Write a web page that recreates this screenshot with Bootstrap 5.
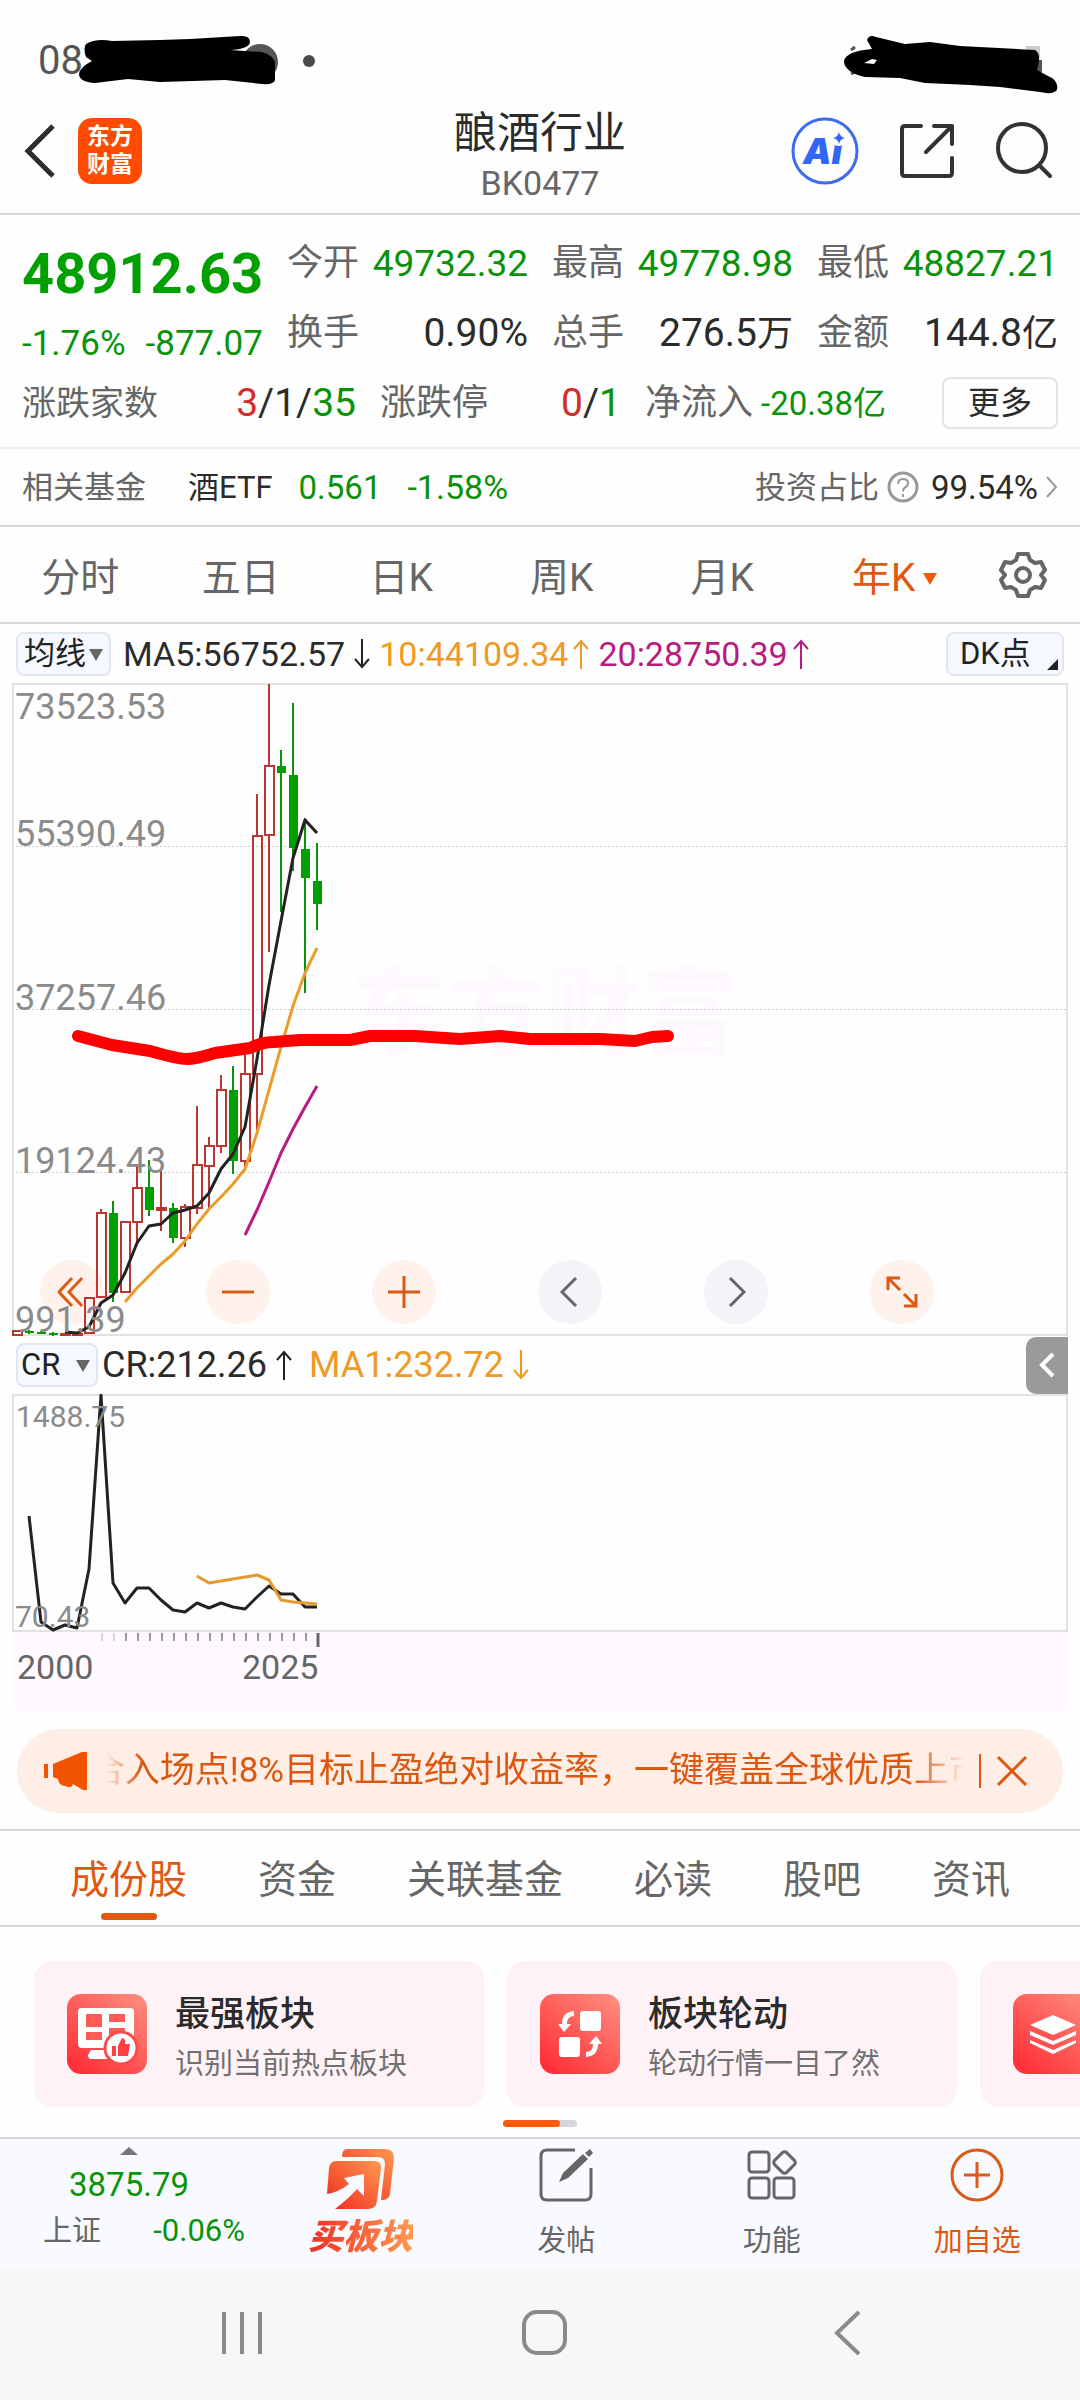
<!DOCTYPE html>
<html lang="zh-CN">
<head>
<meta charset="utf-8">
<meta name="viewport" content="width=device-width, initial-scale=1">
<title>酿酒行业 BK0477</title>
<link href="https://cdn.jsdelivr.net/npm/bootstrap@5.3.0/dist/css/bootstrap.min.css" rel="stylesheet">
<style>
:root{--up:#d42b2b;--down:#0a930a;--ink:#2b2b2b;--soft:#666;--accent:#e2570f;--rule:#d9d9d9}
body{font-family:Roboto,"Noto Sans CJK SC",sans-serif;color:var(--ink);background:#fefefe;font-size:36px;line-height:1;overflow-x:hidden}
svg{display:block;flex:none}
a{color:inherit;text-decoration:none}
.btn{--bs-btn-padding-x:0;--bs-btn-padding-y:0;--bs-btn-border-width:0;line-height:1;color:inherit;font-size:inherit}
.t-up{color:var(--up)}.t-down{color:var(--down)}.t-soft{color:var(--soft)}.t-accent{color:var(--accent)}
.t-ma10{color:#ee9a24}.t-ma20{color:#b81c80}
.rule-b{border-bottom:2px solid var(--rule)}
.statusbar{height:110px}
.topbar{height:105px;padding:0 25px 22px 24px}
.topbar .title{font-size:43px;line-height:46px}
.topbar .code{font-size:34px;line-height:54px}
.topbar .actions{gap:40px}
.brand{width:64px;height:66px;margin-left:22px;border-radius:14px;background:#ff4a00;color:#fff;font-size:23px;line-height:28px;font-weight:700}
.quote{padding:13px 22px 9px;border-bottom:2px solid #ececec}
.price-box{width:265px;color:#00a000}
.price{font-size:56px;line-height:92px;font-weight:700}
.change{font-size:35px;line-height:48px;gap:20px;color:var(--down)}
.stats{display:grid;grid-template-columns:repeat(3,1fr);column-gap:24px}
.stat{height:70px;display:flex;align-items:center;justify-content:space-between;white-space:nowrap}
.updown{width:334px}.limits{width:241px}
.s31{font-size:31px}.s33{font-size:33px}.s34{font-size:34px}.s37{font-size:37px}.s39{font-size:39px}
.more{width:116px;height:52px;border:2px solid #e4e4e4!important;border-radius:8px;font-size:32px}
.fund{height:78px;padding:0 22px;font-size:31px}
.fund .etf{margin-left:42px;gap:26px}
.periods{height:97px;padding-top:8px;font-size:39px;color:var(--soft)}
.period-list{flex:1}
.period-list .nav-item{flex:1 1 0;text-align:center}
.gear{margin:0 33px 8px 36px}
.legend{height:59px;padding:0 16px;font-size:34px;white-space:nowrap}
.legend.sub{height:58px;font-size:36px}
.pick{position:relative}
.pick select,.dk{appearance:none;height:44px;border:2px solid #e2e6ee!important;border-radius:8px;background:#f5f9ff;color:#222;font-size:31px;line-height:38px;padding:0 0 0 6px;font-family:inherit}
.pick select{width:95px}
.sub .pick select{width:82px;padding-left:3px}
.pick svg{position:absolute;right:8px;top:17px;pointer-events:none}
.dk{width:118px;position:relative;text-align:left;padding-left:12px!important}
.dk svg{position:absolute;right:4px;bottom:4px}
.plot{position:relative;margin:0 12px}
.plot>svg{position:relative;width:100%;height:auto;pointer-events:none}
.plot text{font-family:Roboto,"Noto Sans CJK SC",sans-serif;fill:#8b8b8b}
.plot .year{fill:#666}.plot .mark-text{fill:#fef9fe}
.tools{position:absolute;left:28px;bottom:12px;gap:102px}
.tool{width:64px;height:64px;border-radius:50%;background:#fff1ec;display:grid;place-items:center}
.tool.alt{background:#f6f3f8}
.fold{width:42px;height:57px;background:#9b999c;border-radius:10px 0 0 10px;display:grid;place-items:center;margin-right:-4px}
.notice{margin:18px 17px 16px;height:84px;border-radius:42px;background:#ffeee6;color:#dc5710;padding:0 35px 0 27px}
.ticker{flex:1;overflow:hidden;white-space:nowrap;font-size:35px;line-height:52px;display:flex;justify-content:flex-end;margin:0 15px 0 18px;-webkit-mask-image:linear-gradient(90deg,transparent,#000 36px,#000 calc(100% - 50px),transparent);mask-image:linear-gradient(90deg,transparent,#000 36px,#000 calc(100% - 50px),transparent)}
.ticker span{margin-right:-20px}
.vline{width:2px;height:34px;background:#dc5710;margin-right:15px}
.sections{height:98px;border-top:2px solid var(--rule);border-bottom:2px solid var(--rule);padding:0 70px;font-size:39px;color:var(--soft)}
.sections a{position:relative;line-height:98px;height:94px}
.sections a.active::after{content:"";position:absolute;left:50%;margin-left:-28px;bottom:5px;width:56px;height:7px;border-radius:4px;background:var(--accent)}
.promo-row{margin-top:34px;padding-left:34px;gap:23px;overflow:hidden}
.promo{flex:0 0 450px;height:146px;border-radius:18px;background:#fff2f6;padding:0 33px;gap:28px;display:flex;align-items:center}
.promo .words{padding-top:10px}
.promo .name{font-size:35px;line-height:50px;font-weight:500}
.promo .desc{font-size:29px;line-height:48px;color:#717171}
.pager{width:74px;height:7px;border-radius:4px;background:#d6d5de;margin:13px auto 10px}
.pager div{width:57px;height:7px;border-radius:4px;background:#fa5c0a}
.dock{height:129px;border-top:2px solid #d4d6dc;background:#f8faff;font-size:29px;color:var(--soft)}
.dock-item{flex:1;display:flex;flex-direction:column;align-items:center;padding-top:9px}
.dock-item .lbl{line-height:44px;margin-top:17px}
.index-box{width:258px;line-height:46px;padding-top:8px}
.index-box .s33{margin-top:7px}
.index-box .market{padding:0 13px 0 43px}
.buy{font-size:35px;line-height:40px;font-weight:900;font-style:italic;background:linear-gradient(90deg,#ee2f26,#ff9a50);-webkit-background-clip:text;background-clip:text;color:transparent;margin-top:8px}
.sysnav{height:134px;background:#f7f7f7;padding:0 219px 0 221px}
</style>
</head>
<body>

<div class="statusbar d-flex align-items-center justify-content-between" aria-hidden="true">
  <svg width="330" height="110" viewBox="0 0 330 110">
    <text x="38" y="74" font-size="40" fill="#555">08:</text>
    <circle cx="260" cy="62" r="18" fill="#555"/><circle cx="309" cy="61" r="6" fill="#4a4a4a"/>
    <path d="M86 44Q96 38 112 41L160 40 190 39 240 36Q250 35 250 42Q249 49 230 50L262 52Q276 56 275 66V80Q274 85 262 84L225 80 160 82 128 79 95 83Q79 82 79 74Q80 67 92 61L86 57Q83 48 86 44Z" fill="#000"/>
  </svg>
  <svg width="250" height="110" viewBox="830 0 250 110">
    <path d="M1026 46h14v12h-14z" fill="#ccc"/><path d="M1026 60h16v12q-4 6-16 3z" fill="#555"/><path d="M851 50l4-3M851 74l4-2" stroke="#555" stroke-width="3"/>
    <path fill-rule="evenodd" d="M867 40Q869 34 876 37L905 44 930 42 960 46 1035 50Q1042 54 1037 70L1048 76Q1059 80 1057 90Q1053 95 1040 92L1000 87 970 85 925 83 900 78 865 77Q844 72 844 61Q846 51 872 49ZM864 63l8-4 5 1-3 4z" fill="#000"/>
  </svg>
</div>

<header class="topbar rule-b d-flex align-items-center position-relative">
  <button class="btn" aria-label="返回" type="button"><svg width="32" height="56" viewBox="0 0 32 56" fill="none" stroke="#2c2c2c" stroke-width="5"><path d="M29 3 4 28l25 25"/></svg></button>
  <a href="#" class="brand d-flex flex-column align-items-center justify-content-center"><span>东方</span><span>财富</span></a>
  <div class="position-absolute top-0 start-50 translate-middle-x text-center">
    <h1 class="title fw-normal m-0">酿酒行业</h1><div class="code t-soft">BK0477</div>
  </div>
  <div class="actions ms-auto d-flex align-items-center">
    <button class="btn" type="button" aria-label="Ai"><svg width="68" height="68" viewBox="0 0 68 68"><circle cx="34" cy="34" r="32" fill="none" stroke="#3c6cf0" stroke-width="3"/><text x="12" y="47" font-family="Inter" font-weight="900" font-style="italic" font-size="36" fill="#3266f5">Ai</text><circle cx="48" cy="21" r="8" fill="#fff"/><path d="M48 15q1 5 6 6-5 1-6 6-1-5-6-6 5-1 6-6Z" fill="#3266f5"/></svg></button>
    <button class="btn" type="button" aria-label="分享"><svg width="56" height="56" viewBox="0 0 56 56" fill="none" stroke="#333" stroke-width="4" stroke-linecap="round" stroke-linejoin="round"><path d="M22 3H6q-3 0-3 3v44q0 3 3 3h44q3 0 3-3V35M35 3h18v18M53 3 27 29"/></svg></button>
    <button class="btn" type="button" aria-label="搜索"><svg width="60" height="58" viewBox="0 0 60 58" fill="none" stroke="#333" stroke-width="4" stroke-linecap="round"><circle cx="27" cy="26" r="24"/><path d="m45 44 10 10"/></svg></button>
  </div>
</header>

<main>
<section class="quote">
  <div class="d-flex">
    <div class="price-box"><div class="price">48912.63</div><div class="change d-flex"><span>-1.76%</span><span>-877.07</span></div></div>
    <div class="stats flex-fill">
      <div class="stat"><span class="t-soft">今开</span><span class="s37 t-down">49732.32</span></div>
      <div class="stat"><span class="t-soft">最高</span><span class="s37 t-down">49778.98</span></div>
      <div class="stat"><span class="t-soft">最低</span><span class="s37 t-down">48827.21</span></div>
      <div class="stat"><span class="t-soft">换手</span><span class="s39">0.90%</span></div>
      <div class="stat"><span class="t-soft">总手</span><span><span class="s39">276.5</span>万</span></div>
      <div class="stat"><span class="t-soft">金额</span><span><span class="s39">144.8</span>亿</span></div>
    </div>
  </div>
  <div class="d-flex align-items-center">
    <div class="stat updown"><span class="t-soft s34">涨跌家数</span><span class="s39"><span class="t-up">3</span>/1/<span class="t-down">35</span></span></div>
    <div class="stat limits ms-4"><span class="t-soft">涨跌停</span><span class="s39"><span class="t-up">0</span>/<span class="t-down">1</span></span></div>
    <div class="stat ms-4"><span class="t-soft">净流入</span><span class="t-down s33 ms-2">-20.38亿</span></div>
    <button class="btn more ms-auto" type="button">更多</button>
  </div>
</section>

<section class="fund rule-b d-flex align-items-center">
  <span class="t-soft">相关基金</span><a href="#" class="etf d-flex align-items-center"><span>酒ETF</span><span class="t-down s33">0.561</span><span class="t-down s34">-1.58%</span></a>
  <span class="t-soft ms-auto">投资占比</span>
  <svg class="ms-2" width="32" height="32" viewBox="0 0 32 32" fill="none" stroke="#999" stroke-width="3"><circle cx="16" cy="16" r="14"/><path d="M11 13q0-5 5-5t5 4q0 3-3 4.500-2 1-2 4M16 23v3" stroke-width="2"/></svg>
  <a href="#" class="d-flex align-items-center s33 ms-2 ps-1">99.54%<svg class="ms-2" width="12" height="22" viewBox="0 0 12 22" fill="none" stroke="#999" stroke-width="2"><path d="m1 1 9 10-9 10"/></svg></a>
</section>

<nav class="periods rule-b d-flex align-items-center">
  <div class="period-list nav flex-nowrap">
    <a class="nav-item" href="#">分时</a><a class="nav-item" href="#">五日</a><a class="nav-item" href="#">日K</a><a class="nav-item" href="#">周K</a><a class="nav-item" href="#">月K</a>
    <a class="nav-item t-accent d-flex align-items-center justify-content-center" href="#"><span class="ps-4">年K</span><svg class="ms-2" width="14" height="12"><path d="M0 0h14L7 12z" fill="#f05a05"/></svg></a>
  </div>
  <button class="btn gear" type="button" aria-label="设置"><svg width="48" height="48" viewBox="0 0 48 48" fill="none" stroke="#666" stroke-width="4" stroke-linejoin="round"><path d="M19 3h10l2 6 5 3 6-1 4 8-4 5 4 5-4 8-6-1-5 3-2 6H19l-2-6-5-3-6 1-4-8 4-5-4-5 4-8 6 1 5-3Z"/><circle cx="24" cy="24" r="7"/></svg></button>
</nav>

<div class="legend d-flex align-items-center">
  <div class="pick"><select aria-label="主图指标"><option>均线</option></select><svg width="14" height="12"><path d="M0 0h14L7 12z" fill="#666"/></svg></div>
  <span class="ms-2 ps-1">MA5:56752.57</span><svg class="ms-2" width="18" height="32" viewBox="0 0 18 32" fill="none" stroke="#222" stroke-width="2"><path d="M9 1v28M2 21l7 8 7-8"/></svg>
  <span class="ms-2 t-ma10">10:44109.34</span><svg class="ms-1" width="18" height="32" viewBox="0 0 18 32" fill="none" stroke="#ee9a24" stroke-width="2"><path d="M9 31V3M2 11l7-8 7 8"/></svg>
  <span class="ms-2 t-ma20">20:28750.39</span><svg class="ms-1" width="18" height="32" viewBox="0 0 18 32" fill="none" stroke="#b81c80" stroke-width="2"><path d="M9 31V3M2 11l7-8 7 8"/></svg>
  <button class="btn dk ms-auto" type="button">DK点<svg width="11" height="11"><path d="M11 0v11H0z" fill="#222"/></svg></button>
</div>

<div class="plot">
  <div class="tools d-flex">
    <button type="button" class="btn tool" aria-label="收起"><svg width="28" height="32" viewBox="0 0 28 32" fill="none" stroke="#dc5d1a" stroke-width="3"><path d="M14 2 1 16l13 14M24 2 11 16l13 14"/></svg></button>
    <button type="button" class="btn tool" aria-label="缩小"><svg width="32" height="32"><path d="M0 16h32" stroke="#d85a14" stroke-width="3"/></svg></button>
    <button type="button" class="btn tool" aria-label="放大"><svg width="32" height="32"><path d="M0 16h32M16 0v32" stroke="#d85a14" stroke-width="3"/></svg></button>
    <button type="button" class="btn tool alt" aria-label="左移"><svg width="20" height="32" viewBox="0 0 20 32" fill="none" stroke="#666" stroke-width="3"><path d="M16 2 2 16l14 14"/></svg></button>
    <button type="button" class="btn tool alt" aria-label="右移"><svg width="20" height="32" viewBox="0 0 20 32" fill="none" stroke="#666" stroke-width="3"><path d="m4 2 14 14L4 30"/></svg></button>
    <button type="button" class="btn tool" aria-label="全屏"><svg width="32" height="32" viewBox="0 0 32 32" fill="none" stroke="#d85a14" stroke-width="3"><path d="M14 2H2v12M2 2l12 12M18 30h12V18M30 30 18 18"/></svg></button>
  </div>
  <svg viewBox="12 683 1056 653">
    <text class="mark-text" x="350" y="1047" font-size="97" font-weight="700">东方财富</text>
    <path d="M12 846.500H1067M12 1009.500H1067M12 1172.500H1067" stroke="#ccc" stroke-dasharray="2 2"/>
    <path d="M13 684H1067V1335H13Z" fill="none" stroke="#e2e2e2" stroke-width="2"/>
    <g id="candles"></g>
    <g fill="none" stroke-width="3" stroke-linejoin="round">
      <path stroke="#222" d="M65 1332 77 1333 89 1327 101 1303 113 1295 125 1273 137 1243 149 1226 161 1224 173 1213 185 1210 197 1206 209 1193 221 1169 233 1154 245 1127 257 1059 269 985 281 921 293 858 305 820 317 833"/>
      <path stroke="#eb9c2a" d="M125 1302 137 1288 149 1276 161 1264 173 1254 185 1241 197 1224 209 1209 221 1197 233 1184 245 1169 257 1133 269 1090 281 1047 293 1006 305 973 317 948"/>
      <path stroke="#b81c80" d="M245 1235 257 1210 269 1182 281 1153 293 1129 305 1107 317 1086"/>
    </g>
    <path d="M78 1036 112 1045 150 1051Q178 1059 187 1059T215 1053L250 1048Q262 1042 274 1042L300 1040H350L370 1036H415L460 1039 500 1036 530 1039 600 1039 635 1041 652 1037 668 1036" fill="none" stroke="#f00" stroke-width="12" stroke-linecap="round" stroke-linejoin="round"/>
    <g font-size="36"><text x="15" y="719">73523.53</text><text x="15" y="846">55390.49</text><text x="15" y="1010">37257.46</text><text x="15" y="1173">19124.43</text><text x="15" y="1332">991.39</text></g>
  </svg>
</div>

<div class="legend sub d-flex align-items-center">
  <div class="pick"><select aria-label="副图指标"><option>CR</option></select><svg width="14" height="12"><path d="M0 0h14L7 12z" fill="#666"/></svg></div>
  <span class="ms-1">CR:212.26</span><svg class="ms-2" width="18" height="32" viewBox="0 0 18 32" fill="none" stroke="#222" stroke-width="2"><path d="M9 31V3M2 11l7-8 7 8"/></svg>
  <span class="ms-3 t-ma10">MA1:232.72</span><svg class="ms-2" width="18" height="32" viewBox="0 0 18 32" fill="none" stroke="#f09a1c" stroke-width="2"><path d="M9 1v28M2 21l7 8 7-8"/></svg>
  <button type="button" class="btn fold ms-auto" aria-label="展开"><svg width="16" height="26" viewBox="0 0 16 26" fill="none" stroke="#fff" stroke-width="4"><path d="M14 2 3 13l11 11"/></svg></button>
</div>

<div class="plot">
  <svg viewBox="12 1394 1056 317">
    <path d="M12 1632h1055v79H12z" fill="#fefaff"/>
    <path d="M13 1395H1067V1631H13Z" fill="none" stroke="#e2e2e2" stroke-width="2"/>
    <g id="ticks" stroke="#999" stroke-width="2"></g>
    <path d="M318 1633v14" stroke="#666" stroke-width="3"/>
    <g fill="none" stroke-width="3" stroke-linejoin="round">
      <path stroke="#222" d="M29 1516 41 1622 53 1630 65 1625 77 1628 89 1569 101 1395 113 1583 125 1603 137 1588 149 1588 161 1600 173 1610 185 1612 197 1603 209 1608 221 1603 233 1607 245 1609 257 1597 269 1586 281 1594 293 1594 305 1607 317 1607"/>
      <path stroke="#e59a2e" d="M197 1576 209 1583 233 1579 257 1575 269 1580 281 1600 293 1602 317 1604"/>
    </g>
    <text x="16" y="1427" font-size="30">1488.75</text><text x="15" y="1627" font-size="30">70.43</text>
    <text class="year" x="17" y="1679" font-size="34">2000</text><text class="year" x="242" y="1679" font-size="34">2025</text>
  </svg>
</div>

<div class="notice d-flex align-items-center">
  <svg width="44" height="40" viewBox="0 0 44 40" fill="#f05400"><path d="M0 13h4v14H0zM9 13 38 1h5v38h-4L29 33q-1 5-8 2-6 0-7-7l-5-2z"/></svg>
  <div class="ticker"><span>合入场点!8%目标止盈绝对收益率，一键覆盖全球优质上市</span></div>
  <div class="vline"></div>
  <button type="button" class="btn" aria-label="关闭"><svg width="32" height="32" viewBox="0 0 32 32" stroke="#dc5710" stroke-width="3"><path d="m2 2 28 28M30 2 2 30"/></svg></button>
</div>

<nav class="sections d-flex justify-content-between">
  <a href="#" class="active t-accent">成份股</a><a href="#">资金</a><a href="#">关联基金</a><a href="#">必读</a><a href="#">股吧</a><a href="#">资讯</a>
</nav>

<svg width="0" height="0" class="position-absolute"><defs><linearGradient id="rg" x1="1" y1="0" x2="0.200" y2="1"><stop offset="0" stop-color="#ff9080"/><stop offset="1" stop-color="#ff3038"/></linearGradient><linearGradient id="og" x1="0" y1="1" x2="1" y2="0"><stop offset="0" stop-color="#ee2820"/><stop offset="1" stop-color="#ff9a50"/></linearGradient></defs></svg>

<div class="promo-row d-flex">
  <a href="#" class="promo"><svg width="80" height="80" viewBox="0 0 80 80"><rect width="80" height="80" rx="14" fill="url(#rg)"/><path d="M15 14h48q4 0 4 4v36H15q-4 0-4-4V18q0-4 4-4ZM24 56h20v9H24q-3 0-3-4z" fill="#fff"/><path d="M19 20h16v13H19zM42 20h16v8H42zM42 34h16v14H42zM19 38h16v8H19z" fill="#ff5a55"/><circle cx="54" cy="54" r="16" fill="#fff" stroke="#ff4a4b" stroke-width="3"/><path d="M45 52h4v10h-4zM51 52l4-8q4 0 3 6h5l-2 12H51z" fill="#ff4040"/></svg><div class="words"><div class="name">最强板块</div><div class="desc">识别当前热点板块</div></div></a>
  <a href="#" class="promo"><svg width="80" height="80" viewBox="0 0 80 80"><rect width="80" height="80" rx="14" fill="url(#rg)"/><rect x="40" y="17" width="21" height="20" rx="3" fill="#fff"/><rect x="19" y="43" width="21" height="20" rx="3" fill="#fff"/><path d="M34 17v5q-7 0-7 8h4l-7 8-6-8h4q0-12 12-13ZM46 63v-5q7 0 7-8h-4l7-8 6 8h-4q0 12-12 13Z" fill="#fff"/></svg><div class="words"><div class="name">板块轮动</div><div class="desc">轮动行情一目了然</div></div></a>
  <a href="#" class="promo" aria-label="更多板块"><svg width="80" height="80" viewBox="0 0 80 80"><rect width="80" height="80" rx="14" fill="url(#rg)"/><path d="m40 21 23 10-23 10-23-10zM17 37l23 10 23-10v4L40 51 17 41zM17 46l23 10 23-10v3L40 60 17 49z" fill="#fff"/></svg></a>
</div>
<div class="pager"><div></div></div>
</main>

<footer>
  <div class="dock d-flex">
    <a href="#" class="index-box d-flex flex-column align-items-center">
      <svg width="18" height="8"><path d="M0 8 9 0l9 8z" fill="#777"/></svg>
      <span class="t-down s33">3875.79</span>
      <span class="market d-flex align-items-center w-100 justify-content-between">上证<span class="t-down s31">-0.06%</span></span>
    </a>
    <a href="#" class="dock-item"><svg width="68" height="62" viewBox="0 0 68 62"><path d="M20 1h38q9 0 9 9l-4 36q-1 6-9 6l4-36q0-7-7-7H15q0-8 5-8Z" fill="url(#og)"/><path d="M9 13h38q8 0 7 8l-4 32q-1 8-9 8H8Q21 51 30 41l7 7V26L17 30l5 6Q12 44 0 46L2 20q1-7 7-7Z" fill="url(#og)"/></svg><span class="buy">买板块</span></a>
    <a href="#" class="dock-item"><svg width="54" height="54" viewBox="0 0 54 54" fill="none" stroke="#666" stroke-width="3"><path d="M36 2H8Q2 2 2 8v38q0 6 6 6h38q6 0 6-6V20"/><path d="M20 34 24 25 44 6l5 5-20 19z" fill="#666" stroke="none"/><path d="m46 5 5-4 3 4-4 4z" fill="#666" stroke="none"/></svg><span class="lbl">发帖</span></a>
    <a href="#" class="dock-item"><svg width="50" height="54" viewBox="0 0 50 54" fill="none" stroke="#666" stroke-width="3"><rect x="2" y="4" width="20" height="20" rx="3"/><rect x="2" y="30" width="20" height="20" rx="3"/><rect x="27" y="30" width="20" height="20" rx="3"/><rect x="29" y="6" width="17" height="17" rx="3" transform="rotate(45 37.500 14.500)"/></svg><span class="lbl">功能</span></a>
    <a href="#" class="dock-item t-accent"><svg width="54" height="54" viewBox="0 0 54 54" fill="none" stroke="#dc5a18" stroke-width="3"><circle cx="27" cy="27" r="25"/><path d="M14 27h26M27 14v26"/></svg><span class="lbl">加自选</span></a>
  </div>
  <div class="sysnav d-flex align-items-center justify-content-between">
    <button type="button" class="btn" aria-label="最近任务"><svg width="42" height="44"><path d="M3 1v42M21 1v42M39 1v42" stroke="#8a8a8a" stroke-width="4"/></svg></button>
    <button type="button" class="btn" aria-label="主屏幕"><svg width="46" height="46"><rect x="2" y="2" width="41" height="41" rx="13" fill="none" stroke="#8a8a8a" stroke-width="4"/></svg></button>
    <button type="button" class="btn" aria-label="返回上一页"><svg width="35" height="46" fill="none" stroke="#8a8a8a" stroke-width="4"><path d="M33 2 11 23l22 21"/></svg></button>
  </div>
</footer>

<script src="https://cdn.jsdelivr.net/npm/bootstrap@5.3.0/dist/js/bootstrap.bundle.min.js"></script>
<script>
// one row per year: centre x, rising?, wick top, body top, body bottom, wick bottom
const bars=[[17,1,1331,1331,1335,1335],[29,0,1330,1331,1333,1334],[41,0,1331,1332,1334,1334],[53,0,1332,1333,1335,1336],[65,1,1333,1334,1335,1335],[77,1,1333,1334,1335,1335],[89,1,1298,1298,1333,1333],[101,1,1209,1213,1297,1298],[113,0,1201,1213,1293,1302],[125,1,1222,1222,1292,1292],[137,1,1165,1188,1222,1242],[149,0,1160,1187,1210,1216],[161,1,1170,1208,1210,1231],[173,0,1203,1208,1238,1243],[185,1,1204,1207,1238,1247],[197,1,1106,1165,1208,1214],[209,1,1137,1146,1166,1208],[221,1,1075,1090,1146,1153],[233,0,1066,1090,1161,1174],[245,1,1050,1074,1161,1168],[257,1,794,836,1074,1130],[269,1,684,766,835,952],[281,0,750,766,773,912],[293,0,703,775,848,871],[305,0,818,849,878,993],[317,0,843,881,904,930]];
document.getElementById('candles').innerHTML=bars.map(([x,up,a,b,c,d])=>up
 ?`<path d="M${x} ${a}V${b}M${x} ${c}V${d}M${x-4} ${b}h9V${c}h-9Z" fill="none" stroke="#bb3832" stroke-width="2"/>`
 :`<path d="M${x} ${a}V${d}" stroke="#0a930a" stroke-width="2"/><path d="M${x-4} ${b}h9V${c}h-9Z" fill="#00a000"/>`).join('');
let t='';for(let x=102;x<318;x+=12)t+=`<path d="M${x} 1633v8" opacity="${x<120?.4:1}"/>`;
document.getElementById('ticks').innerHTML=t;
</script>
</body>
</html>
